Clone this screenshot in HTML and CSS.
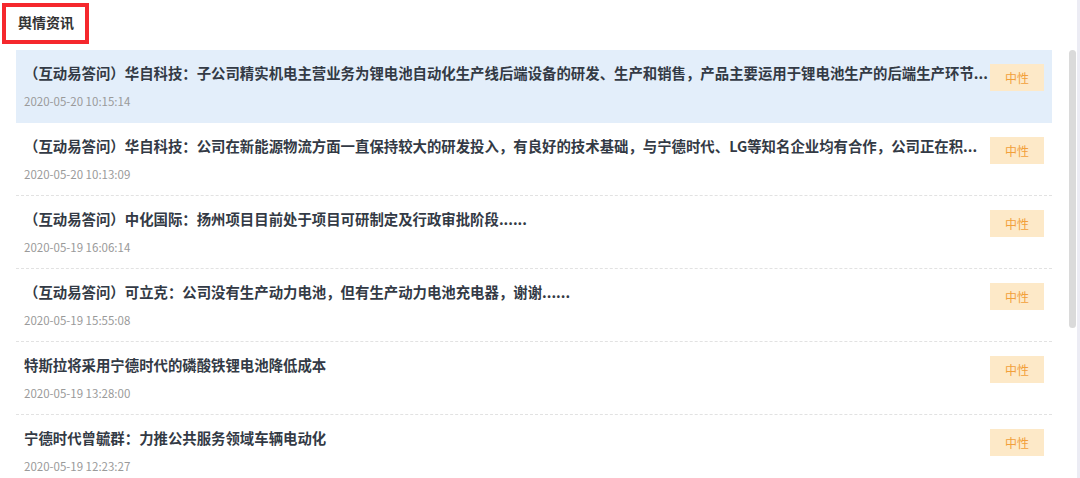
FILE: index.html
```html
<!DOCTYPE html>
<html lang="zh-CN">
<head>
    <meta charset="UTF-8">
    <meta name="viewport" content="width=device-width, initial-scale=1.0">
    <title>舆情资讯</title>
    <link rel="stylesheet" href="styles.css">
</head>
<body>
    <div class="page">
        <header class="panel-head">
            <div class="mark">
                <h2>舆情资讯</h2>
            </div>
        </header>

        <div class="feed">
            <ul class="news">
                <li class="item active">
                    <div class="text">
                        <p class="title">（互动易答问）华自科技：子公司精实机电主营业务为锂电池自动化生产线后端设备的研发、生产和销售，产品主要运用于锂电池生产的后端生产环节...</p>
                        <p class="date">2020-05-20 10:15:14</p>
                    </div>
                    <span class="tag">中性</span>
                </li>
                <li class="item">
                    <div class="text">
                        <p class="title">（互动易答问）华自科技：公司在新能源物流方面一直保持较大的研发投入，有良好的技术基础，与宁德时代、LG等知名企业均有合作，公司正在积...</p>
                        <p class="date">2020-05-20 10:13:09</p>
                    </div>
                    <span class="tag">中性</span>
                </li>
                <li class="item">
                    <div class="text">
                        <p class="title">（互动易答问）中化国际：扬州项目目前处于项目可研制定及行政审批阶段......</p>
                        <p class="date">2020-05-19 16:06:14</p>
                    </div>
                    <span class="tag">中性</span>
                </li>
                <li class="item">
                    <div class="text">
                        <p class="title">（互动易答问）可立克：公司没有生产动力电池，但有生产动力电池充电器，谢谢......</p>
                        <p class="date">2020-05-19 15:55:08</p>
                    </div>
                    <span class="tag">中性</span>
                </li>
                <li class="item">
                    <div class="text">
                        <p class="title">特斯拉将采用宁德时代的磷酸铁锂电池降低成本</p>
                        <p class="date">2020-05-19 13:28:00</p>
                    </div>
                    <span class="tag">中性</span>
                </li>
                <li class="item">
                    <div class="text">
                        <p class="title">宁德时代曾毓群：力推公共服务领域车辆电动化</p>
                        <p class="date">2020-05-19 12:23:27</p>
                    </div>
                    <span class="tag">中性</span>
                </li>
            </ul>

            <!-- scrollbar of the list -->
            <div class="track">
                <div class="thumb"></div>
            </div>
        </div>
    </div>
</body>
</html>
```

FILE: styles.css
```css
html, body {
    margin: 0;
    padding: 0;
    height: 100%;
    overflow: hidden;
}

body {
    font-family: "Noto Sans CJK SC", "Liberation Sans", sans-serif;
    background-color: #fff;
    color: #333a45;
}

.page {
    height: 100%;
    border-right: 3px solid #ececf4;
    box-sizing: border-box;
}

.panel-head {
    height: 50px;
    padding: 3px 0 0 2px;
    box-sizing: border-box;
}

.mark {
    display: inline-block;
    border: 4px solid #f5282d;
    padding: 5px 11px 8px 12px;
}

.mark h2 {
    margin: 0;
    font-size: 14px;
    line-height: 20px;
    font-weight: 700;
    color: #333;
}

.feed {
    display: flex;
    padding-left: 16px;
}

.news {
    list-style: none;
    margin: 0;
    padding: 0;
    width: 1036px;
}

.item {
    display: flex;
    align-items: flex-start;
    height: 72px;
    padding: 0 8px;
    border-bottom: 1px dashed #e2e2e2;
}

.item.active {
    background-color: #e3eefa;
    border-bottom-color: #e3eefa;
}

.text {
    flex: 1;
    min-width: 0;
    padding-top: 12px;
}

.title {
    margin: 0;
    font-size: 14.4px;
    line-height: 22px;
    font-weight: 700;
    white-space: nowrap;
    overflow: hidden;
    text-overflow: ellipsis;
}

.date {
    margin: 8px 0 0;
    font-size: 11.5px;
    line-height: 18px;
    color: #9a9a9a;
}

.tag {
    flex: none;
    width: 54px;
    height: 27px;
    margin-top: 14px;
    margin-left: 2px;
    background-color: #fde9c8;
    color: #f2a03a;
    font-size: 12px;
    line-height: 27px;
    text-align: center;
}

.track {
    width: 7px;
    margin-left: 17px;
}

.thumb {
    height: 278px;
    border-radius: 4px;
    background-color: #dadada;
}
```
